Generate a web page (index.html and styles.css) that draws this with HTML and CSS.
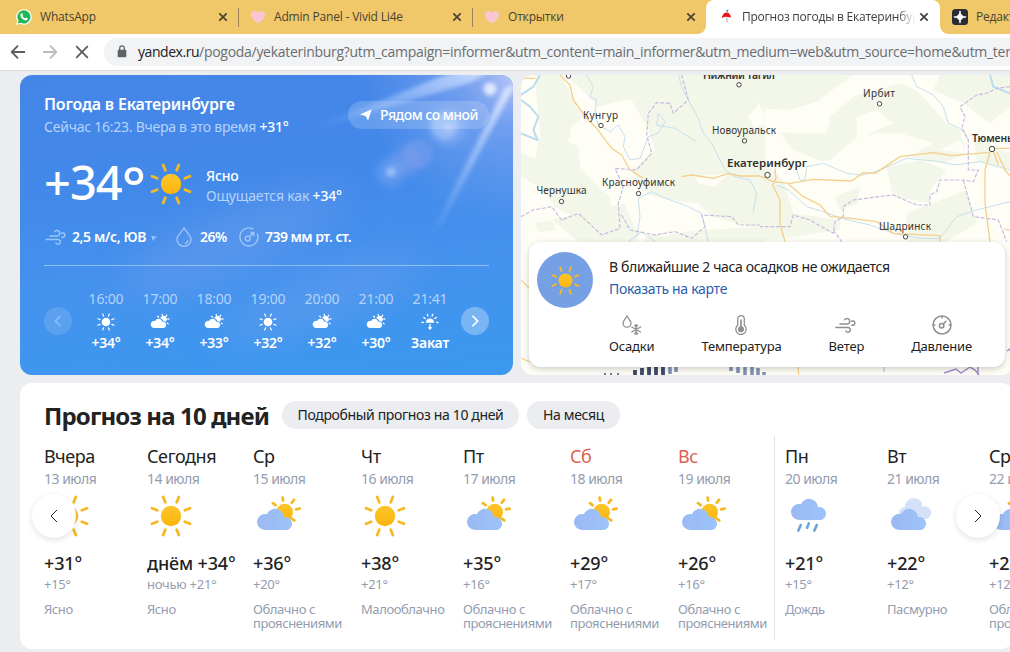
FILE: index.html
```html
<!DOCTYPE html>
<html lang="ru">
  <head>
    <meta charset="UTF-8" />
    <meta name="viewport" content="width=device-width, initial-scale=1.0" />
    <title>Прогноз погоды в Екатеринбурге</title>
    <link rel="stylesheet" href="styles.css">
  </head>
  <body>
    <!-- icon sprite -->
    <svg class="sprite" width="0" height="0">
      <defs>
        <linearGradient id="sun-fill" x1="0" y1="0" x2="0" y2="1">
          <stop offset="0" stop-color="#fdc52a" />
          <stop offset="1" stop-color="#fbb50c" />
        </linearGradient>
        <linearGradient id="cloud-fill" x1="0" y1="0" x2="1" y2="0">
          <stop offset="0" stop-color="#9bb9f2" />
          <stop offset="1" stop-color="#9cc3fa" />
        </linearGradient>
      </defs>
      <symbol id="sun" viewBox="0 0 48 48">
        <circle cx="24" cy="24" r="10.2" fill="url(#sun-fill)" />
        <path d="M29.7 10.2l2.1-5.2M37.8 18.3l5.2-2.1M37.8 29.7l5.2 2.1M29.7 37.8l2.1 5.2M18.3 37.8l-2.1 5.2M10.2 29.7l-5.2 2.1M10.2 18.3l-5.2-2.1M18.3 10.2l-2.1-5.2" stroke="#f5b921" stroke-width="2.8" stroke-linecap="round" />
      </symbol>
      <symbol id="cloud" viewBox="0 0 48 48">
        <path d="M12 38a8 8 0 1 1 1.8-15.8A9 9 0 0 1 31 25.2a6.6 6.6 0 0 1 3.2 12.8z" fill="url(#cloud-fill)" />
      </symbol>
      <symbol id="partly" viewBox="0 0 48 48">
        <circle cx="31.6" cy="20.2" r="8.4" fill="url(#sun-fill)" />
        <path d="M29.6 5.6l.5 3M41 7.8l-2.2 2.8M46.6 16.6l-3.4.8M38.6 26.6l2.6 1.8M20 11.2l2.6 2" stroke="#f5b921" stroke-width="2.8" stroke-linecap="round" />
        <use href="#cloud" width="48" height="48" />
      </symbol>
      <symbol id="rain" viewBox="0 0 48 48">
        <use href="#cloud" x="2" y="-10" width="48" height="48" />
        <path d="M15.8 33l-2.4 5.6M23.8 31.4l-1.8 4.4M31.8 33l-2.4 5.6" stroke="#6ba4dc" stroke-width="2.6" stroke-linecap="round" />
      </symbol>
      <symbol id="overcast" viewBox="0 0 48 48">
        <path d="M18 27a6 6 0 1 1 0-12A8 8 0 0 1 35.6 14.500a5.600 5.600 0 0 1 4 12.500z" fill="#d5e1f8" />
        <use href="#cloud" width="48" height="48" />
      </symbol>
      <symbol id="sun-small" viewBox="0 0 20 20">
        <circle cx="10" cy="10" r="4.300" fill="currentColor" />
        <path d="M12.400 4.200l.900-2.200M15.800 7.600l2.200-.9M15.800 12.400l2.200.9M12.400 15.800l.9 2.200M7.600 15.800l-.9 2.200M4.200 12.400l-2.200.9M4.200 7.600l-2.200-.9M7.600 4.200l-.9-2.200" stroke="currentColor" stroke-width="1.200" stroke-linecap="round" />
      </symbol>
      <symbol id="partly-small" viewBox="0 0 20 20">
        <path d="M4.500 16a3.600 3.600 0 1 1 .6-7.100A3.800 3.800 0 0 1 12.200 9.700a3.200 3.200 0 0 1 1.300 6.300z" fill="currentColor" />
        <path d="M10.200 5.900a3.500 3.500 0 1 1 5.300 4.200 4.400 4.400 0 0 0-2.300-1.400 4.600 4.600 0 0 0-3-2.800z" fill="currentColor" />
        <path d="M12.200 2.300l.2 1.200M16.800 3.200l-.8 1.100M19 6.800l-1.300.3M17.200 11.200l.9.6M7.600 4.300l1 .8" stroke="currentColor" stroke-width="1.300" stroke-linecap="round" />
      </symbol>
      <symbol id="sunset" viewBox="0 0 20 20">
        <path d="M5.700 10.700a4.300 4.300 0 0 1 8.600 0z" fill="currentColor" />
        <path d="M2 10.500l1.400-.1M16.600 10.400l1.400.1M3.800 5.400l1.400 1.100M16.200 5.400l-1.400 1.100M7.300 2.300l.6 1.700M12.700 2.300l-.6 1.700M10 12.500v4.300" stroke="currentColor" stroke-width="1.300" stroke-linecap="round" />
        <path d="M7.600 15.200h4.800L10 18z" fill="currentColor" />
      </symbol>
      <symbol id="wind" viewBox="0 0 22 20">
        <g fill="none" stroke="currentColor" stroke-width="1.500" stroke-linecap="round">
          <path d="M5 9h7.200a2.800 2.800 0 1 0-2.500-4.400" />
          <path d="M1 12.500h12.200a2.400 2.400 0 1 1-2.300 3.500" />
          <path d="M16.600 6.200a2.200 2.200 0 1 1 1.800 4h-1.600" />
        </g>
      </symbol>
      <symbol id="gauge" viewBox="0 0 20 20">
        <g fill="none" stroke="currentColor" stroke-width="1.500" stroke-linecap="round">
          <circle cx="10" cy="10" r="9" />
          <circle cx="9.600" cy="10.800" r="2.200" />
          <path d="M11.200 9.200l2.700-2.900M10 1.500v1.400M1.500 10h1.400M17.100 10h1.400" />
        </g>
      </symbol>
      <symbol id="close" viewBox="0 0 10 10">
        <path d="M1.300 1.300l7.400 7.400M8.700 1.300l-7.400 7.400" stroke="currentColor" stroke-width="1.700" />
      </symbol>
      <symbol id="heart" viewBox="0 0 16 16">
        <path d="M8 14.500C5 12.200 1 9.600 1 5.700 1 3.400 2.700 2 4.600 2 6 2 7.300 2.800 8 4c.7-1.200 2-2 3.400-2C13.300 2 15 3.400 15 5.700c0 3.900-4 6.500-7 8.800z" fill="#fbc6d4" />
      </symbol>
      <symbol id="chev-left" viewBox="0 0 12 16">
        <path d="M9 2L3 8l6 6" fill="none" stroke="currentColor" />
      </symbol>
      <symbol id="chev-right" viewBox="0 0 12 16">
        <path d="M3 2l6 6-6 6" fill="none" stroke="currentColor" />
      </symbol>
    </svg>

    <div class="tabs">
      <div class="tab">
        <svg class="favicon" viewBox="0 0 16 16">
          <path d="M8 .2a7.700 7.700 0 0 1 0 15.500 7.800 7.800 0 0 1-3.600-.9L.2 15.900l1.100-4A7.700 7.700 0 0 1 8 .2z" fill="#fff" />
          <path d="M8 1.300a6.600 6.600 0 1 1-3.300 12.400l-2.900.7.800-2.800A6.600 6.600 0 0 1 8 1.300z" fill="#1fb655" />
          <path d="M5.400 4.300c.5-.3.8-.1 1 .3l.6 1.300c.1.400-.6 1-.5 1.200.6 1.100 1.400 1.800 2.500 2.300.4.100.8-1 1.200-.8l1.400.7c.5.300-.1 1.500-.7 1.800-2.700 1-6.600-2.700-6.500-5.200 0-.7.500-1.300 1-1.600z" fill="#fff" />
        </svg>
        <span class="tab-title">WhatsApp</span>
        <svg class="tab-close"><use href="#close" /></svg>
      </div>
      <div class="tab tab-divided">
        <svg class="favicon"><use href="#heart" /></svg>
        <span class="tab-title">Admin Panel - Vivid Li4e</span>
        <svg class="tab-close"><use href="#close" /></svg>
      </div>
      <div class="tab tab-divided">
        <svg class="favicon"><use href="#heart" /></svg>
        <span class="tab-title">Открытки</span>
        <svg class="tab-close"><use href="#close" /></svg>
      </div>
      <div class="tab tab-active">
        <svg class="favicon" viewBox="0 0 16 16">
          <circle cx="9.300" cy="1.700" r="1" fill="#3f6fd0" />
          <path d="M4 9.300a4.400 5.300 0 0 1 9-.6 7 7 0 0 0-3.300-.7 7 7 0 0 0-5.700 1.300z" fill="#f01016" />
          <path d="M8.800 8.500l.5 5" stroke="#b9bcc4" stroke-width="1.200" />
        </svg>
        <span class="tab-title tab-title-faded">Прогноз погоды в Екатеринбурге</span>
        <svg class="tab-close"><use href="#close" /></svg>
      </div>
      <div class="tab">
        <svg class="favicon" viewBox="0 0 16 16">
          <rect width="16" height="16" rx="3.500" fill="#2b2c33" />
          <path d="M8 1.800Q8.300 7.700 14.200 8 8.300 8.300 8 14.200 7.700 8.300 1.800 8 7.700 7.700 8 1.800z" fill="#fff" stroke="#fff" stroke-width=".8" />
        </svg>
        <span class="tab-title">Редактор</span>
      </div>
    </div>

    <div class="toolbar">
      <svg class="nav-icon" viewBox="0 0 16 16"><path d="M15 8H2M8 1.700L1.700 8 8 14.300" /></svg>
      <svg class="nav-icon nav-disabled" viewBox="0 0 16 16"><path d="M1 8h13M8 1.700L14.300 8 8 14.300" /></svg>
      <svg class="nav-icon" viewBox="0 0 16 16"><path d="M2.200 2.200l11.600 11.600M13.800 2.200L2.200 13.800" /></svg>
      <div class="omnibox">
        <svg class="lock" viewBox="0 0 10 13">
          <rect x=".7" y="4.700" width="8.600" height="7.600" rx="1" fill="#5f6368" />
          <path d="M2.700 5V3.200a2.300 2.300 0 0 1 4.600 0V5" fill="none" stroke="#5f6368" stroke-width="1.300" />
        </svg>
        <span class="url"><span class="url-host">yandex.ru</span>/pogoda/yekaterinburg?utm_campaign=informer&amp;utm_content=main_informer&amp;utm_medium=web&amp;utm_source=home&amp;utm_term=title</span>
      </div>
    </div>

    <main class="page">
      <section class="fact">
        <svg class="sky" viewBox="0 0 493 300" preserveAspectRatio="none">
          <defs>
            <filter id="soft" x="-50%" y="-50%" width="200%" height="200%"><feGaussianBlur stdDeviation="4" /></filter>
            <filter id="haze" x="-50%" y="-50%" width="200%" height="200%"><feGaussianBlur stdDeviation="20" /></filter>
            <filter id="thin" x="-50%" y="-50%" width="200%" height="200%"><feGaussianBlur stdDeviation="2" /></filter>
            <radialGradient id="flare" gradientUnits="userSpaceOnUse" cx="493" cy="0" r="150">
              <stop offset="0" stop-color="#c3cbf8" stop-opacity=".9" />
              <stop offset=".35" stop-color="#9db4f4" stop-opacity=".5" />
              <stop offset="1" stop-color="#8eb0f2" stop-opacity="0" />
            </radialGradient>
            <linearGradient id="ray" x1="1" y1="0" x2="0" y2="1">
              <stop offset="0" stop-color="#eef3ff" stop-opacity=".85" />
              <stop offset=".5" stop-color="#b9d3ff" stop-opacity=".5" />
              <stop offset="1" stop-color="#8fbcff" stop-opacity="0" />
            </linearGradient>
          </defs>
          <rect width="493" height="300" fill="url(#flare)" />
          <ellipse cx="215" cy="165" rx="120" ry="26" transform="rotate(-22 215 165)" fill="#8ea8ee" opacity=".3" filter="url(#haze)" />
          <ellipse cx="300" cy="225" rx="110" ry="22" transform="rotate(-22 300 225)" fill="#8fabf0" opacity=".28" filter="url(#haze)" />
          <path d="M493 -16L440 -6 280 58 450 8z" fill="url(#ray)" filter="url(#thin)" />
          <path d="M496 8L484 14 404 172 425 144z" fill="url(#ray)" filter="url(#thin)" />
          <circle cx="470" cy="14" r="6.500" fill="#eef3ff" opacity=".85" filter="url(#thin)" />
          <circle cx="427" cy="52" r="18" fill="#9dbcf8" opacity=".5" filter="url(#soft)" />
          <circle cx="425" cy="51" r="13" fill="#a5cffc" opacity=".5" filter="url(#thin)" />
          <circle cx="428" cy="53" r="4" fill="#c9c8f4" opacity=".7" filter="url(#thin)" />
          <circle cx="398" cy="79" r="15" fill="#8fa6f0" opacity=".35" filter="url(#thin)" />
          <circle cx="386" cy="86" r="15" fill="#8ba3ee" opacity=".4" filter="url(#soft)" />
          <circle cx="371" cy="97" r="14" fill="#8db0f4" opacity=".4" filter="url(#soft)" />
          <circle cx="371" cy="97" r="5" fill="#a9cffc" opacity=".7" filter="url(#thin)" />
        </svg>

        <div class="fact-content">
          <div class="fact-head">
            <div>
              <h1 class="fact-title">Погода в Екатеринбурге</h1>
              <div class="fact-time">Сейчас 16:23. Вчера в это время <b>+31°</b></div>
            </div>
            <div class="near">
              <svg class="near-icon" viewBox="0 0 12 12"><path d="M11.700.3L8 11.700 5.700 7 0 5.500z" fill="#fff" /></svg>
              <span>Рядом со мной</span>
            </div>
          </div>

          <div class="fact-main">
            <span class="fact-temp">+34<span class="degree">°</span></span>
            <svg class="icon-big"><use href="#sun" /></svg>
            <div class="fact-feels">
              <div class="fact-cond">Ясно</div>
              <div>Ощущается как <b>+34°</b></div>
            </div>
          </div>

          <div class="fact-props">
            <svg class="icon-wind"><use href="#wind" /></svg>
            <span class="prop prop-wind">2,5 м/с, ЮВ</span>
            <svg class="icon-dir" viewBox="0 0 8 8"><path d="M0 .5l7.500 2L4 3.800 2.700 7.500z" fill="currentColor" /></svg>
            <svg class="icon-drop" viewBox="0 0 16 20"><path d="M8 1.200C5.800 4.800 1 8.600 1 12.400a7 6.800 0 0 0 14 0C15 8.600 10.200 4.800 8 1.200zM9.500 16.300a3.500 3.500 0 0 0 2.400-2.600" fill="none" stroke="currentColor" stroke-width="1.400" stroke-linecap="round" /></svg>
            <span class="prop prop-hum">26%</span>
            <svg class="icon-gauge" viewBox="0 0 20 20">
              <g fill="none" stroke="currentColor" stroke-width="1.400" stroke-linecap="round">
                <path d="M14 1.900a9 9 0 1 0 4.400 5" />
                <circle cx="8.700" cy="11.500" r="2.400" />
                <path d="M10.600 9.600l3.600-3.800" />
                <path d="M10.300 4.700h5.200v5.200z" fill="currentColor" stroke="none" />
              </g>
            </svg>
            <span class="prop prop-press">739 мм рт. ст.</span>
          </div>

          <div class="hours">
            <div class="round round-off"><svg class="chev"><use href="#chev-left" /></svg></div>
            <div class="hour"><span class="hour-time">16:00</span><svg class="hour-icon"><use href="#sun-small" /></svg><b>+34°</b></div>
            <div class="hour"><span class="hour-time">17:00</span><svg class="hour-icon"><use href="#partly-small" /></svg><b>+34°</b></div>
            <div class="hour"><span class="hour-time">18:00</span><svg class="hour-icon"><use href="#partly-small" /></svg><b>+33°</b></div>
            <div class="hour"><span class="hour-time">19:00</span><svg class="hour-icon"><use href="#sun-small" /></svg><b>+32°</b></div>
            <div class="hour"><span class="hour-time">20:00</span><svg class="hour-icon"><use href="#partly-small" /></svg><b>+32°</b></div>
            <div class="hour"><span class="hour-time">21:00</span><svg class="hour-icon"><use href="#partly-small" /></svg><b>+30°</b></div>
            <div class="hour"><span class="hour-time">21:41</span><svg class="hour-icon"><use href="#sunset" /></svg><b>Закат</b></div>
            <div class="round"><svg class="chev"><use href="#chev-right" /></svg></div>
          </div>
        </div>
      </section>

      <section class="map">
        <svg class="map-canvas" viewBox="0 0 492 300">
          <!-- west half -->
          <g transform="translate(-6 -5) scale(.33333)">
            <g class="forest">
              <path d="M60 15L140 15 175 90 205 140 170 170 160 215 190 230 195 290 240 340 285 380 290 420 200 450 120 410 80 350 90 320 60 270 75 190 65 80z" />
              <path d="M150 15L490 15 750 15 750 480 590 440 550 400 490 395 400 375 350 300 420 240 400 180 350 90 250 110 200 60z" />
              <path d="M18 250L70 270 130 310 125 350 70 350 18 320z" />
              <path d="M190 430L330 400 370 500 370 515 190 515 110 450z" />
              <path d="M400 495L560 480 750 470 750 515 380 515z" />
              <path d="M60 460L110 450 125 480 70 485z" />
            </g>
            <g class="steppe">
              <path d="M250 110L330 90 370 120 390 170 400 250 330 290 260 220 240 170z" />
              <path d="M390 375L480 390 560 430 560 475 440 500 385 480z" />
              <path d="M540 320L640 310 600 350 550 340z" />
              <path d="M700 140L740 90 750 160 720 175z" />
              <path d="M190 60L240 100 220 140 180 110z" />
            </g>
            <g class="water">
              <path class="water-wide" d="M75 15L55 50 18 75M18 90L45 110 70 140 55 180 68 210 18 190" />
              <path d="M215 15L235 50 225 80 245 90 240 130 250 165 285 185 310 165 330 200 325 230 345 270 375 265 385 240 400 200 430 190 450 155 430 130 425 165 480 175 520 200 545 215" />
              <path d="M490 15L500 50 520 90 550 145 565 190 590 220 605 250 630 300 660 320 705 330 725 370 715 425" />
              <path d="M365 500L375 440 370 385 410 365 440 380 520 410 560 430 580 515" />
              <path d="M340 515L380 485 420 515" />
            </g>
            <g class="region">
              <path d="M18 440L55 420 110 410 140 450 190 430 260 495 315 475 310 400 325 350 300 295 365 300 410 250 395 195 400 130 425 98 465 100 475 130 520 90 500 15" />
              <path d="M320 435L345 480 420 495 480 485 530 505 570 470 560 435 650 440 670 465 750 465" />
            </g>
            <path class="road" d="M135 15L165 45 175 90 215 145 245 175 290 235 320 255 345 300 385 325M18 25L60 25M500 320L530 315 595 325 640 310 675 318 745 318" />
          </g>
          <!-- east half -->
          <g transform="translate(239 -5) scale(.33333)">
            <g class="forest">
              <path d="M0 15L280 15 230 50 170 95 90 120 0 115z" />
              <path d="M280 80L420 40 470 60 560 160 600 180 620 250 550 280 450 260 520 220 420 190 350 190 280 210 200 280 100 240 60 190 180 180 210 140z" />
              <path d="M540 15L750 15 750 110 690 160 610 100 520 60z" />
              <path d="M380 290L480 270 560 300 510 360 510 400 400 380z" />
              <path d="M0 260L70 330 100 430 240 450 240 480 0 515z" />
              <path d="M225 380L300 350 290 400 240 420z" />
              <path d="M440 430L620 360 650 460 560 515 440 515z" />
              <path d="M640 200L750 250 750 300 650 270z" />
            </g>
            <g class="steppe">
              <path d="M0 160L60 130 140 150 210 150 200 190 100 190z" />
              <path d="M290 140L350 120 400 160 330 190 320 220 290 220z" />
              <path d="M540 240L600 210 620 250z" />
              <path d="M110 280L230 270 230 320 140 330z" />
            </g>
            <g class="water">
              <path d="M455 15L470 50 520 75 550 110 565 160 610 180 625 210" />
              <path d="M110 300L120 330 135 330 140 290 190 280 225 295 260 310 310 315 360 300 440 265 540 275 585 285 660 275 750 300" />
              <path d="M50 345L85 360 140 410 190 425 245 445 330 465 400 490 480 505 540 505 590 440 650 420 750 395" />
              <path class="water-wide" d="M690 15L700 50 750 70" />
            </g>
            <g class="region">
              <path d="M750 50L710 55 680 70 650 75 600 110 615 140 605 175 625 210 625 300 655 300 640 335 610 330 540 330 530 365 510 375 510 405 470 405 400 375 370 378 280 390 250 410 250 440 225 455 220 490 150 450 100 435 90 470 0 470" />
              <path d="M610 330L625 385 640 440 715 450 740 515" />
              <path d="M220 480L245 515" />
            </g>
            <g class="road">
              <path d="M0 318L40 335 90 340 160 328 275 333 310 308 345 310 420 260 520 248 575 257 690 247M750 235L700 235" />
              <path d="M45 295L48 325 38 345 60 390 60 460 75 515M85 342L130 380 180 405 210 440 250 442 350 455 400 490 540 497 540 515M690 247L675 300 675 400 690 515M710 245L735 300 750 318M695 230L715 285" />
            </g>
          </g>
          <!-- strip under the popup -->
          <g class="road"><path d="M277 270l2 30M0 185l9 9M483 134l9 2M0 263l9 4" transform="translate(0 20)" /></g>
          <path class="region" d="M363 285v15" />
          <path d="M423 298l12-4 5 4 9-6 5 3 4 5M486 276l6-4M457 292v8" fill="none" stroke="#a78fd0" stroke-width="1.500" />
          <path d="M84 300v-2M90 300v-2M97 300v-2" stroke="#6f7c94" stroke-width="2" />
          <path d="M114 300v-5M121 300v-7M128 300v-9M135 300v-9M142 300v-9" stroke="#3d4b66" stroke-width="3.800" />
          <path d="M149 299v-8M155 297v-6M210 296v-5M217 298v-7M224 300v-9M231 300v-9M237 300v-7M243 300v-3" stroke="#7f93b4" stroke-width="3.500" />

          <g class="dots">
            <circle cx="47.500" cy="1" r="2.200" /><circle cx="80" cy="50.500" r="2.200" /><circle cx="40.500" cy="126.500" r="2.200" /><circle cx="117.500" cy="118.500" r="2.200" />
            <circle cx="218" cy="9.800" r="2.200" /><circle cx="223.500" cy="65.800" r="2.200" /><circle cx="246.500" cy="100" r="2.700" /><circle cx="358.500" cy="28.800" r="2.200" />
            <circle cx="384.500" cy="161.800" r="2.200" /><circle cx="471" cy="74" r="2.700" />
          </g>
          <g class="cities">
            <text x="62" y="43.500" textLength="35">Кунгур</text>
            <text x="15.500" y="119" textLength="50">Чернушка</text>
            <text x="81" y="111" textLength="73">Красноуфимск</text>
            <text x="191" y="58.500" textLength="64">Новоуральск</text>
            <text x="342" y="21.500" textLength="32">Ирбит</text>
            <text x="358" y="154.500" textLength="52">Шадринск</text>
            <text class="city-big city-mid" x="182" y="3.500" textLength="72">Нижний Тагил</text>
            <text class="city-big" x="206" y="92" textLength="80">Екатеринбург</text>
            <text class="city-big city-mid" x="451" y="67" textLength="41">Тюмень</text>
          </g>
        </svg>

        <div class="nowcast">
          <div class="nowcast-sun"><svg class="nowcast-icon"><use href="#sun" /></svg></div>
          <div class="nowcast-body">
            <div class="nowcast-text">В ближайшие 2 часа осадков не ожидается</div>
            <a class="nowcast-link">Показать на карте</a>
            <div class="layers">
              <div class="layer">
                <svg class="layer-icon" viewBox="0 0 20 20">
                  <g fill="none" stroke="currentColor" stroke-width="1.300" stroke-linecap="round">
                    <path d="M5 1C3.800 3.400 1 5.600 1 8.200a4 4 0 0 0 8 0C9 5.600 6.200 3.400 5 1z" />
                    <path d="M14.200 9.500v10M9.800 12l8.800 5M18.600 12l-8.800 5M12.700 10.400l1.500 1.300 1.500-1.300M12.700 18.700l1.500-1.300 1.500 1.300" />
                  </g>
                </svg>
                <span>Осадки</span>
              </div>
              <div class="layer">
                <svg class="layer-icon" viewBox="0 0 20 20">
                  <path d="M6.700 10.300V4a3.300 3.300 0 0 1 6.600 0v6.300a5.200 5.200 0 1 1-6.600 0z" fill="none" stroke="currentColor" stroke-width="1.300" />
                  <circle cx="10" cy="14.300" r="3" fill="currentColor" />
                  <path d="M10 4.500v9" stroke="currentColor" stroke-width="1.700" />
                </svg>
                <span>Температура</span>
              </div>
              <div class="layer">
                <svg class="layer-icon layer-wind"><use href="#wind" /></svg>
                <span>Ветер</span>
              </div>
              <div class="layer">
                <svg class="layer-icon"><use href="#gauge" /></svg>
                <span>Давление</span>
              </div>
            </div>
          </div>
        </div>
      </section>

      <section class="forecast">
        <div class="forecast-head">
          <h2 class="forecast-title">Прогноз на 10 дней</h2>
          <a class="pill pill-details">Подробный прогноз на 10 дней</a>
          <a class="pill pill-month">На месяц</a>
        </div>
        <div class="days">
          <div class="day"><div class="day-name">Вчера</div><div class="day-date">13 июля</div><svg class="icon-big"><use href="#sun" /></svg><div class="day-temp">+31°</div><div class="day-night">+15°</div><div class="day-cond">Ясно</div></div>
          <div class="day"><div class="day-name">Сегодня</div><div class="day-date">14 июля</div><svg class="icon-big"><use href="#sun" /></svg><div class="day-temp">днём +34°</div><div class="day-night">ночью +21°</div><div class="day-cond">Ясно</div></div>
          <div class="day"><div class="day-name">Ср</div><div class="day-date">15 июля</div><svg class="icon-big"><use href="#partly" /></svg><div class="day-temp">+36°</div><div class="day-night">+20°</div><div class="day-cond">Облачно с прояснениями</div></div>
          <div class="day"><div class="day-name">Чт</div><div class="day-date">16 июля</div><svg class="icon-big"><use href="#sun" /></svg><div class="day-temp">+38°</div><div class="day-night">+21°</div><div class="day-cond">Малооблачно</div></div>
          <div class="day"><div class="day-name">Пт</div><div class="day-date">17 июля</div><svg class="icon-big"><use href="#partly" /></svg><div class="day-temp">+35°</div><div class="day-night">+16°</div><div class="day-cond">Облачно с прояснениями</div></div>
          <div class="day"><div class="day-name day-off">Сб</div><div class="day-date">18 июля</div><svg class="icon-big"><use href="#partly" /></svg><div class="day-temp">+29°</div><div class="day-night">+17°</div><div class="day-cond">Облачно с прояснениями</div></div>
          <div class="day"><div class="day-name day-off">Вс</div><div class="day-date">19 июля</div><svg class="icon-big"><use href="#partly" /></svg><div class="day-temp">+26°</div><div class="day-night">+16°</div><div class="day-cond">Облачно с прояснениями</div></div>
          <div class="day day-week"><div class="day-name">Пн</div><div class="day-date">20 июля</div><svg class="icon-big"><use href="#rain" /></svg><div class="day-temp">+21°</div><div class="day-night">+15°</div><div class="day-cond">Дождь</div></div>
          <div class="day"><div class="day-name">Вт</div><div class="day-date">21 июля</div><svg class="icon-big"><use href="#overcast" /></svg><div class="day-temp">+22°</div><div class="day-night">+12°</div><div class="day-cond">Пасмурно</div></div>
          <div class="day"><div class="day-name">Ср</div><div class="day-date">22 июля</div><svg class="icon-big"><use href="#partly" /></svg><div class="day-temp">+22°</div><div class="day-night">+12°</div><div class="day-cond">Облачно с прояснениями</div></div>
        </div>
        <div class="scroll scroll-left"><svg class="scroll-chev"><use href="#chev-left" /></svg></div>
        <div class="scroll scroll-right"><svg class="scroll-chev"><use href="#chev-right" /></svg></div>
      </section>
    </main>
  </body>
</html>
```
FILE: styles.css
```css
* {
  box-sizing: border-box;
}

body {
  margin: 0;
  height: 652px;
  overflow: hidden;
  background: #ebedf0;
  color: #222;
  font: 14px/18px "Noto Sans", "Open Sans", sans-serif;
  white-space: nowrap;
}

h1,
h2 {
  margin: 0;
}

.sprite {
  position: absolute;
}

/* browser chrome */

.tabs {
  display: flex;
  height: 34px;
  padding-left: 4px;
  overflow: hidden;
  background: #f0c869;
  font: 12px/16px "Open Sans", "Noto Sans", sans-serif;
  letter-spacing: -0.180px;
  color: #4a4233;
}

.tab {
  position: relative;
  flex: none;
  display: flex;
  align-items: center;
  width: 234px;
  padding: 0 10px 0 12px;
}

.tab-divided::before {
  content: "";
  position: absolute;
  left: 0;
  top: 8px;
  width: 1px;
  height: 19px;
  background: #9b8558;
}

.favicon {
  flex: none;
  width: 16px;
  height: 16px;
  margin-right: 8px;
}

.tab-title {
  flex: 1;
  overflow: hidden;
}

.tab-close {
  flex: none;
  width: 10px;
  height: 10px;
  margin-left: 8px;
}

.tab-active {
  padding-right: 11px;
  background: #fff;
  border-radius: 8px 8px 0 0;
  color: #3c4043;
}

.tab-active::before,
.tab-active::after {
  content: "";
  position: absolute;
  bottom: 0;
  width: 8px;
  height: 8px;
}

.tab-active::before {
  left: -8px;
  background: radial-gradient(circle at 0 0, #f0c869 7.500px, #fff 8px);
}

.tab-active::after {
  right: -8px;
  background: radial-gradient(circle at 100% 0, #f0c869 7.500px, #fff 8px);
}

.tab-title-faded {
  margin-right: -4px;
  letter-spacing: -0.230px;
  mask-image: linear-gradient(to right, #000 90%, transparent);
}

.toolbar {
  display: flex;
  align-items: center;
  gap: 16px;
  height: 37px;
  padding: 0 0 1px 10px;
  background: #fff;
  border-bottom: 1px solid #d9dadd;
}

.nav-icon {
  flex: none;
  width: 16px;
  height: 16px;
  fill: none;
  stroke: #5a5d61;
  stroke-width: 1.800;
}

.nav-disabled {
  stroke: #babcbe;
}

.omnibox {
  flex: 1;
  display: flex;
  align-items: center;
  gap: 11px;
  height: 28px;
  margin-left: -2px;
  padding-left: 13px;
  overflow: hidden;
  border-radius: 14px 0 0 14px;
  background: #f1f3f4;
}

.lock {
  flex: none;
  width: 10px;
  height: 13px;
}

.url {
  font: 14px/20px "Open Sans", "Noto Sans", sans-serif;
  letter-spacing: -0.290px;
  color: #6a6d72;
}

.url-host {
  letter-spacing: -0.450px;
  color: #202124;
}

/* page */

.page {
  display: grid;
  grid-template-columns: 493px 492px;
  grid-template-rows: 300px 266px;
  gap: 8px;
  padding: 4px 0 0 20px;
}

.icon-big {
  flex: none;
  display: block;
  width: 48px;
  height: 48px;
}

/* current weather */

.fact {
  position: relative;
  overflow: hidden;
  border-radius: 12px;
  background: linear-gradient(175deg, #4585e8 0%, #4289ea 35%, #4592ee 65%, #3a99ef 100%);
  color: #fff;
}

.sky {
  position: absolute;
  left: 0;
  top: 0;
  width: 100%;
  height: 100%;
}

.fact-content {
  position: relative;
  padding: 20px 24px 0;
}

.fact-head {
  display: flex;
  justify-content: space-between;
  align-items: flex-start;
  height: 64px;
}

.fact-title {
  font-size: 16px;
  line-height: 18px;
  font-weight: 600;
  letter-spacing: -0.180px;
}

.fact-time {
  margin-top: 5px;
  letter-spacing: -0.240px;
  color: #b5d3fb;
}

.fact b {
  font-weight: 500;
  color: #fff;
}

.near {
  display: flex;
  align-items: center;
  gap: 8px;
  width: 141px;
  height: 28px;
  margin-top: 6px;
  padding-left: 12px;
  border-radius: 14px;
  background: rgba(255, 255, 255, 0.18);
  font-weight: 500;
  letter-spacing: -0.500px;
}

.near-icon {
  width: 12px;
  height: 12px;
}

.fact-main {
  display: flex;
  align-items: center;
  height: 50px;
}

.fact-temp {
  width: 103px;
  height: 54px;
  font-size: 47px;
  line-height: 50px;
  font-weight: 500;
  letter-spacing: -1px;
}

.degree {
  font-size: 57px;
  line-height: 30px;
  vertical-align: -8px;
}

.fact-feels {
  margin-left: 11px;
  padding-top: 4px;
  line-height: 20px;
  letter-spacing: -0.180px;
  color: #b5d3fb;
}

.fact-cond {
  color: #fff;
  font-weight: 500;
}

.fact-props {
  display: flex;
  align-items: center;
  height: 20px;
  margin-top: 18px;
  padding-left: 1px;
  color: #9cc6f8;
}

.icon-wind {
  width: 22px;
  height: 20px;
}

.icon-dir {
  width: 7px;
  height: 7px;
  margin-top: 3px;
}

.icon-drop {
  width: 16px;
  height: 20px;
  margin-left: 18px;
}

.icon-gauge {
  width: 20px;
  height: 20px;
}

.prop {
  color: #fff;
  font-weight: 600;
  letter-spacing: -0.550px;
}

.prop-wind {
  width: 79px;
  margin-left: 5px;
  letter-spacing: -0.420px;
}

.prop-hum {
  width: 39px;
  margin-left: 8px;
}

.prop-press {
  margin-left: 6px;
}

.hours {
  display: flex;
  align-items: center;
  margin-top: 18px;
  padding-top: 24px;
  border-top: 1px solid rgba(255, 255, 255, 0.4);
}

.hour {
  flex: none;
  display: flex;
  flex-direction: column;
  align-items: center;
  width: 54px;
  line-height: 18px;
  letter-spacing: -0.200px;
}

.hour b {
  margin-top: 2px;
  font-weight: 600;
}

.hour-time {
  color: #b5d3fb;
}

.hour-icon {
  width: 20px;
  height: 20px;
  margin-top: 4px;
}

.round {
  flex: none;
  display: flex;
  align-items: center;
  justify-content: center;
  width: 28px;
  height: 28px;
  margin: 0 0 0 4px;
  border-radius: 50%;
  background: rgba(255, 255, 255, 0.3);
  stroke-width: 2;
}

.round-off {
  margin: 0 7px 0 0;
  background: rgba(255, 255, 255, 0.13);
  color: #8dbdf6;
}

.chev {
  width: 12px;
  height: 14px;
}

/* map */

.map {
  position: relative;
  overflow: hidden;
  border-radius: 12px;
  background: #fefef7;
}

.map-canvas {
  display: block;
  width: 492px;
  height: 300px;
}

.forest {
  fill: #f3f7e9;
}

.steppe {
  fill: #fefef7;
}

.water,
.region,
.road {
  fill: none;
  stroke-linejoin: round;
}

.water {
  stroke: #c6dfec;
  stroke-width: 3;
}

.water-wide {
  stroke: #b9dcee;
  stroke-width: 6;
}

.region {
  stroke: #c7bade;
  stroke-width: 3.500;
  stroke-dasharray: 12 5;
}

.road {
  stroke: #f4d08c;
  stroke-width: 4;
}

.map-canvas > .road,
.map-canvas > .region {
  stroke-width: 1.200;
}

.dots {
  fill: #fff;
  stroke: #444;
  stroke-width: 1;
}

.cities {
  font-size: 10px;
  fill: #333;
}

.city-big {
  font-size: 11.500px;
  font-weight: 600;
}

.city-mid {
  font-size: 10.500px;
}

.nowcast {
  position: absolute;
  left: 8px;
  top: 167px;
  display: flex;
  gap: 16px;
  width: 476px;
  height: 125px;
  padding: 10px 8px;
  border-radius: 12px;
  background: #fff;
  box-shadow: 0 2px 6px rgba(0, 0, 0, 0.2);
}

.nowcast-sun {
  flex: none;
  display: flex;
  align-items: center;
  justify-content: center;
  width: 56px;
  height: 56px;
  border-radius: 50%;
  background: #76a0e4;
}

.nowcast-icon {
  width: 33px;
  height: 33px;
}

.nowcast-text {
  margin-top: 6px;
  letter-spacing: -0.350px;
}

.nowcast-link {
  display: block;
  margin-top: 4px;
  letter-spacing: -0.300px;
  color: #2a5fae;
}

.layers {
  display: flex;
  justify-content: space-between;
  width: 363px;
  margin-top: 17px;
}

.layer {
  display: flex;
  flex-direction: column;
  align-items: center;
  font-size: 13px;
  letter-spacing: -0.150px;
}

.layer-icon {
  width: 20px;
  height: 20px;
  margin-bottom: 2px;
  color: #8f8f8f;
}

.layer-wind {
  width: 22px;
}

/* ten days forecast */

.forecast {
  position: relative;
  grid-column: 1 / -1;
  overflow: hidden;
  padding: 18px 0 0 24px;
  border-radius: 12px;
  background: #fff;
}

.forecast-head {
  display: flex;
  align-items: center;
  height: 28px;
}

.forecast-title {
  width: 238px;
  padding-top: 2px;
  font-size: 24px;
  font-weight: 700;
  letter-spacing: -0.850px;
}

.pill {
  height: 28px;
  border-radius: 14px;
  background: #ebedf0;
  line-height: 27px;
  text-align: center;
  letter-spacing: -0.350px;
}

.pill-details {
  width: 237px;
}

.pill-month {
  width: 93px;
  margin-left: 8px;
}

.days {
  display: grid;
  grid-template-columns: 103px 106px 108px 102px 107px 108px 107px 102px 102px 107px;
  height: 204px;
  margin-top: 7px;
}

.day {
  padding-top: 9px;
}

.day-week {
  position: relative;
}

.day-week::before {
  content: "";
  position: absolute;
  left: -11px;
  top: 0;
  width: 1px;
  height: 204px;
  background: #e0e1e4;
}

.day-name {
  margin-bottom: 2px;
  font-size: 18px;
  line-height: 22px;
  letter-spacing: -0.400px;
}

.day-off {
  color: #e0604f;
}

.day-date {
  line-height: 20px;
  letter-spacing: -0.500px;
  color: #939cb0;
}

.day .icon-big {
  margin-top: 3px;
}

.day-temp {
  margin: 12px 0 1px;
  font-size: 18px;
  line-height: 22px;
  font-weight: 500;
  letter-spacing: -0.150px;
}

.day-night {
  font-size: 13px;
  color: #939cb0;
  letter-spacing: -0.250px;
}

.day-cond {
  width: 95px;
  margin-top: 9px;
  font-size: 13px;
  line-height: 14px;
  letter-spacing: -0.420px;
  white-space: normal;
  color: #939cb0;
}

.scroll {
  position: absolute;
  top: 111px;
  display: flex;
  align-items: center;
  justify-content: center;
  width: 44px;
  height: 44px;
  border-radius: 50%;
  background: #fff;
  box-shadow: 0 2px 6px rgba(0, 0, 0, 0.12);
}

.scroll-left {
  left: 12px;
}

.scroll-right {
  left: 936px;
}

.scroll-chev {
  width: 12px;
  height: 16px;
}
```
